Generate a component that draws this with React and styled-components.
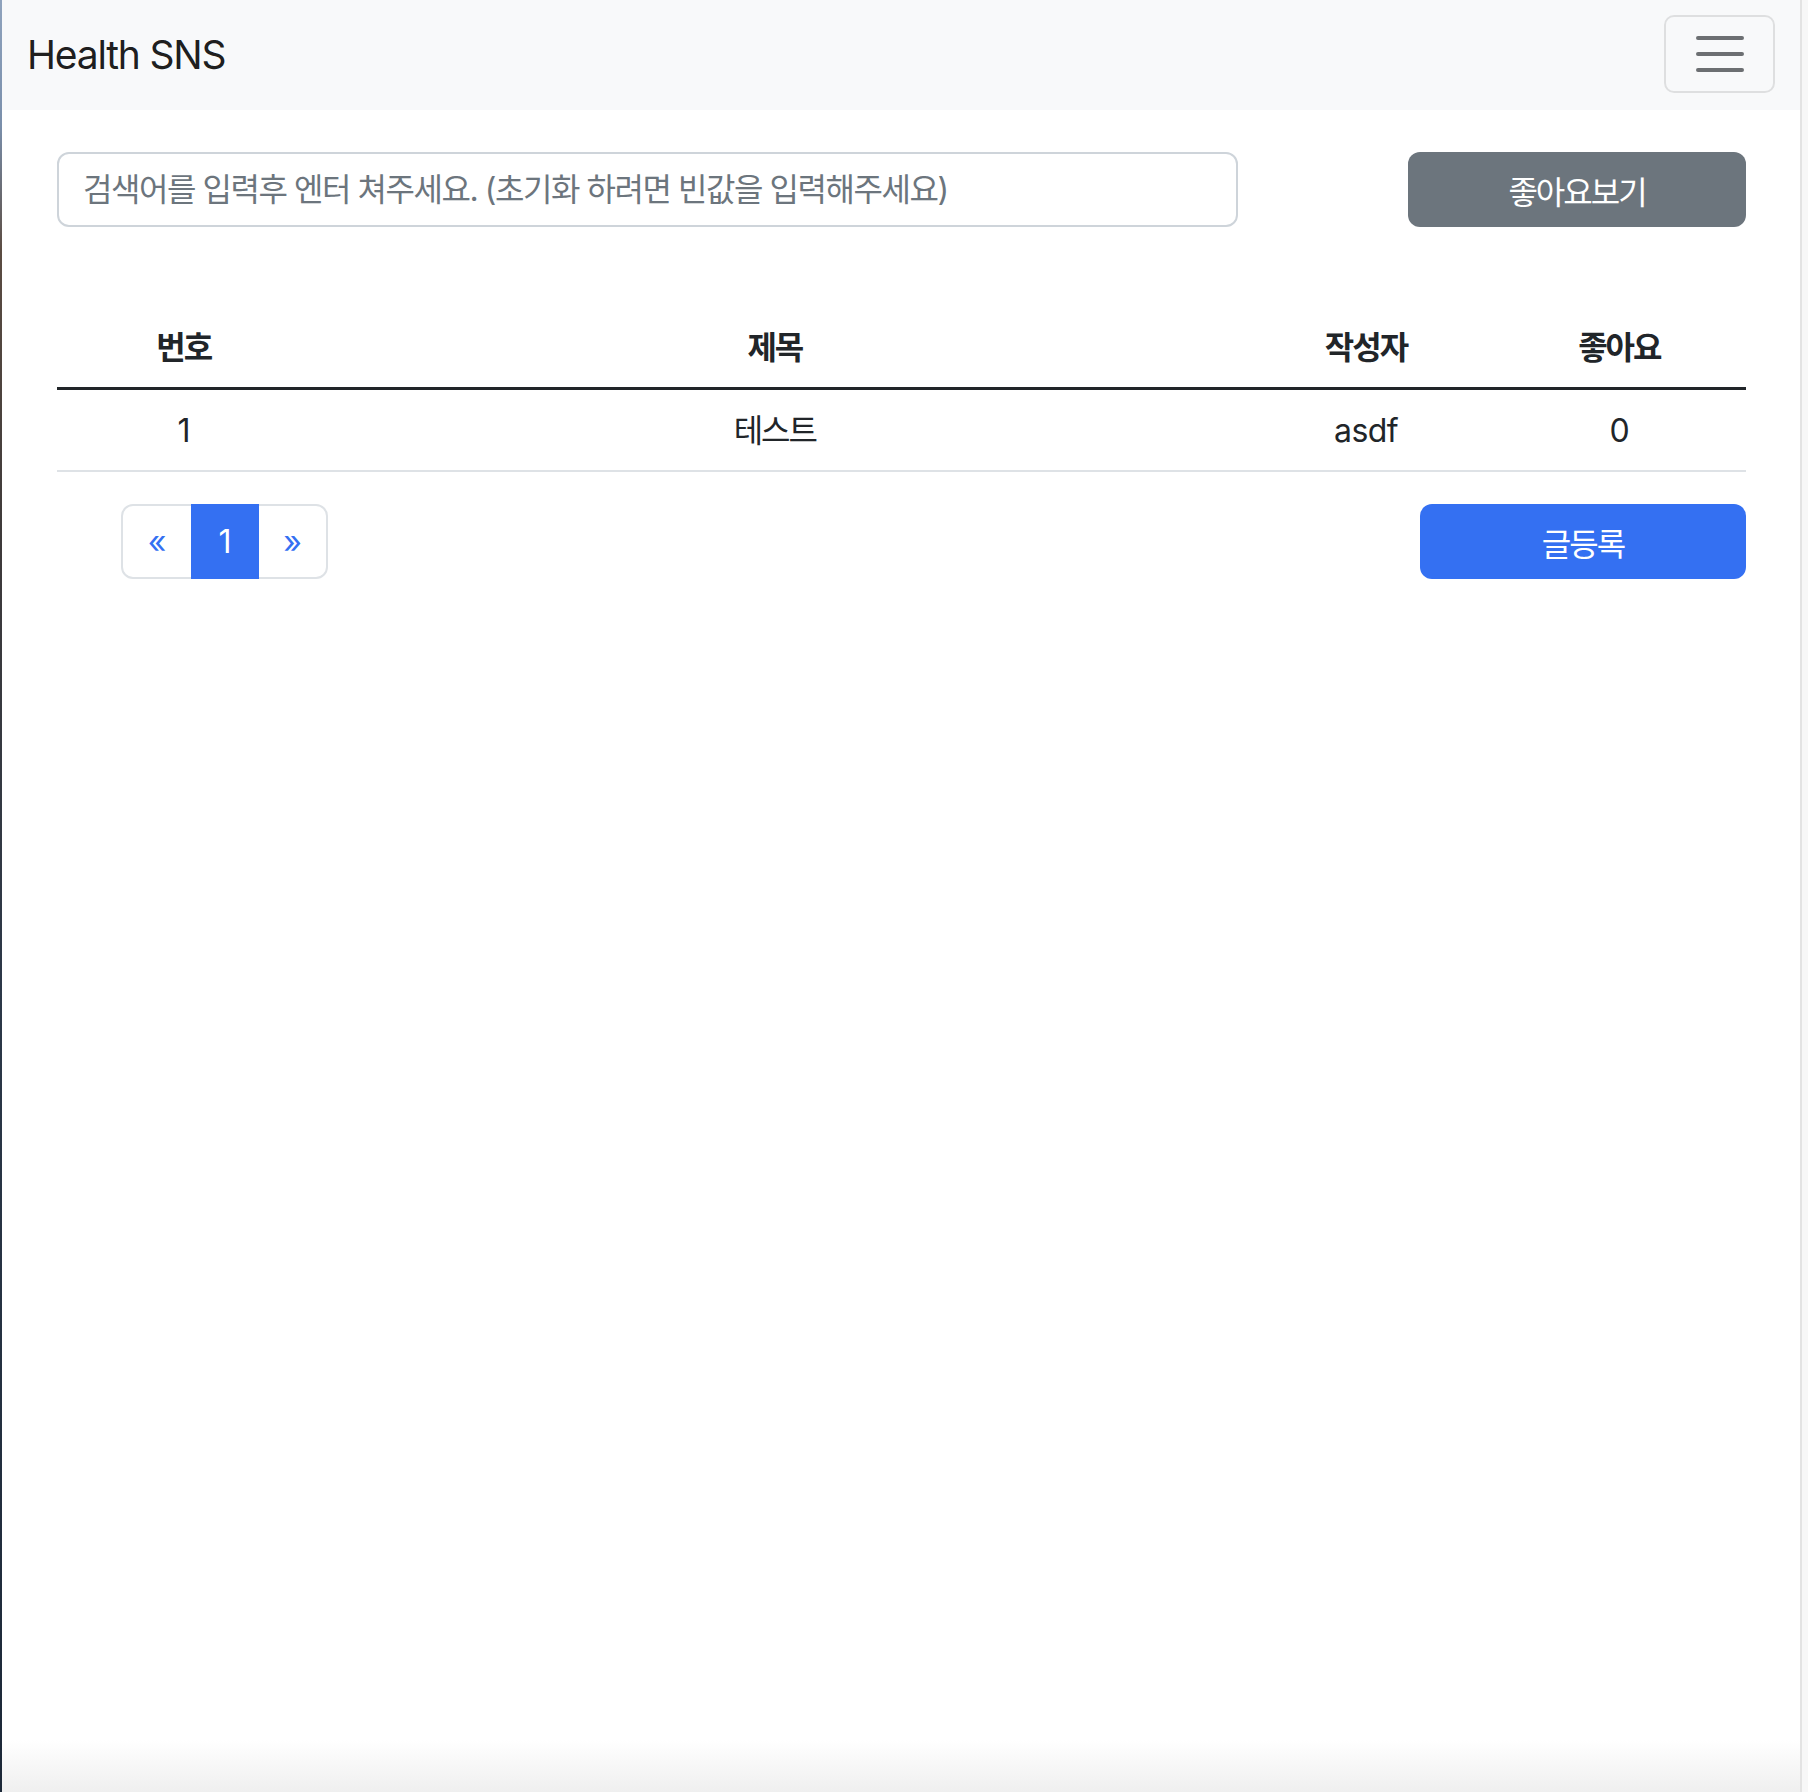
import React from "react";
import styled, { createGlobalStyle } from "styled-components";

const GlobalStyle = createGlobalStyle`
  html, body {
    margin: 0;
    padding: 0;
    background: #ffffff;
  }
  body {
    font-family: Inter, "Noto Sans CJK KR", "Noto Sans", sans-serif;
    color: #212529;
  }
  * { box-sizing: border-box; }
`;

const Frame = styled.div`
  display: flex;
  width: 1808px;
  height: 1792px;
  overflow: hidden;
`;

const DesktopEdge = styled.div`
  width: 2px;
  flex: none;
  background: linear-gradient(
    to bottom,
    #8fa3bd 0%,
    #7a8fab 7%,
    #5b4c42 14%,
    #3e3a3a 30%,
    #2c3848 55%,
    #1c2838 100%
  );
`;

const ScrollEdge = styled.div`
  width: 8px;
  flex: none;
  border-left: 2px solid #e3e3e3;
  background: #f7f7f7;
`;

const Page = styled.div`
  flex: 1;
  display: flex;
  flex-direction: column;
  background: linear-gradient(
    to bottom,
    #ffffff 0,
    #ffffff calc(100% - 52px),
    #efefef 100%
  );
`;

const Navbar = styled.nav`
  height: 110px;
  background: #f8f9fa;
  display: flex;
  align-items: center;
  justify-content: space-between;
  padding: 0 25px 0 25px;
`;

const Brand = styled.a`
  font-family: Inter, "Noto Sans CJK KR", sans-serif;
  font-size: 39px;
  line-height: 60px;
  color: rgba(0, 0, 0, 0.9);
  text-decoration: none;
  letter-spacing: -1.2px;
  margin-top: 0;
`;

const Toggler = styled.button`
  width: 111px;
  height: 78px;
  margin-top: -2px;
  border: 2px solid rgba(0, 0, 0, 0.1);
  border-radius: 10px;
  background: transparent;
  display: flex;
  align-items: center;
  justify-content: center;
  padding: 0;
`;

const Main = styled.main`
  padding: 42px 54px 0 55px;
  display: flex;
  flex-direction: column;
`;

const SearchRow = styled.div`
  display: flex;
  justify-content: space-between;
  align-items: flex-start;
`;

const SearchInput = styled.input`
  width: 1181px;
  height: 75px;
  border: 2px solid #ced4da;
  border-radius: 12px;
  padding: 0 24px;
  font-family: Inter, "Noto Sans CJK KR", sans-serif;
  font-size: 32px;
  letter-spacing: -1.45px;
  color: #212529;
  background: #fff;
  outline: none;
  &::placeholder {
    color: #6c757d;
    opacity: 1;
  }
`;

const Button = styled.button`
  width: ${(p) => p.$w}px;
  height: 75px;
  border: none;
  border-radius: 12px;
  background: ${(p) => (p.$variant === "primary" ? "#3470f2" : "#6c757d")};
  color: #fff;
  font-family: Inter, "Noto Sans CJK KR", sans-serif;
  font-size: 32px;
  letter-spacing: -2px;
  padding: 0;
  display: flex;
  align-items: center;
  justify-content: center;
`;

const Table = styled.table`
  width: 100%;
  border-collapse: collapse;
  margin-top: 80px;
  margin-bottom: 32px;
`;

const Th = styled.th`
  width: ${(p) => p.$w};
  padding: 17px 0 15px;
  line-height: 48px;
  font-size: 32px;
  font-weight: 700;
  letter-spacing: -2px;
  text-align: center;
  border-bottom: 3px solid #212529;
  color: #212529;
`;

const Td = styled.td`
  padding: 17px 0 15px;
  line-height: 48px;
  font-size: 32px;
  letter-spacing: ${(p) => (p.$ko ? "-2px" : "-0.6px")};
  text-align: center;
  border-bottom: 2px solid #dee2e6;
  color: #212529;
`;

const BottomRow = styled.div`
  display: flex;
  justify-content: space-between;
  align-items: flex-start;
`;

const Pagination = styled.ul`
  list-style: none;
  display: flex;
  margin: 0 0 0 64px;
  padding: 0;
`;

const PageLink = styled.li`
  height: 75px;
  width: ${(p) => p.$w}px;
  display: flex;
  align-items: center;
  justify-content: center;
  font-size: 32px;
  font-family: Inter, sans-serif;
  border: 2px solid ${(p) => (p.$active ? "#3470f2" : "#dee2e6")};
  background: ${(p) => (p.$active ? "#3470f2" : "#fff")};
  color: ${(p) => (p.$active ? "#fff" : "#3470f2")};
  margin-left: ${(p) => (p.$first ? "0" : "-2px")};
  position: relative;
  z-index: ${(p) => (p.$active ? 1 : 0)};
  border-radius: ${(p) =>
    p.$first ? "12px 0 0 12px" : p.$last ? "0 12px 12px 0" : "0"};
`;

function HamburgerIcon() {
  return (
    <svg width="60" height="60" viewBox="0 0 30 30" aria-hidden="true">
      <path
        d="M4 7h22M4 15h22M4 23h22"
        stroke="rgba(33,37,41,0.65)"
        strokeWidth="2"
        strokeLinecap="round"
        strokeMiterlimit="10"
        fill="none"
      />
    </svg>
  );
}

const rows = [{ no: 1, title: "테스트", writer: "asdf", likes: 0 }];

export default function App() {
  return (
    <>
      <GlobalStyle />
      <Frame>
        <DesktopEdge />
        <Page>
          <Navbar>
            <Brand href="#">Health SNS</Brand>
            <Toggler aria-label="Toggle navigation">
              <HamburgerIcon />
            </Toggler>
          </Navbar>
          <Main>
            <SearchRow>
              <SearchInput placeholder="검색어를 입력후 엔터 쳐주세요. (초기화 하려면 빈값을 입력해주세요)" />
              <Button $w={338}>좋아요보기</Button>
            </SearchRow>
            <Table>
              <thead>
                <tr>
                  <Th $w="15%">번호</Th>
                  <Th $w="55%">제목</Th>
                  <Th $w="15%">작성자</Th>
                  <Th $w="15%">좋아요</Th>
                </tr>
              </thead>
              <tbody>
                {rows.map((r) => (
                  <tr key={r.no}>
                    <Td>{r.no}</Td>
                    <Td $ko>{r.title}</Td>
                    <Td>{r.writer}</Td>
                    <Td>{r.likes}</Td>
                  </tr>
                ))}
              </tbody>
            </Table>
            <BottomRow>
              <Pagination>
                <PageLink $first $w={72}>«</PageLink>
                <PageLink $active $w={68}>1</PageLink>
                <PageLink $last $w={71}>»</PageLink>
              </Pagination>
              <Button $variant="primary" $w={326}>글등록</Button>
            </BottomRow>
          </Main>
        </Page>
        <ScrollEdge />
      </Frame>
    </>
  );
}
